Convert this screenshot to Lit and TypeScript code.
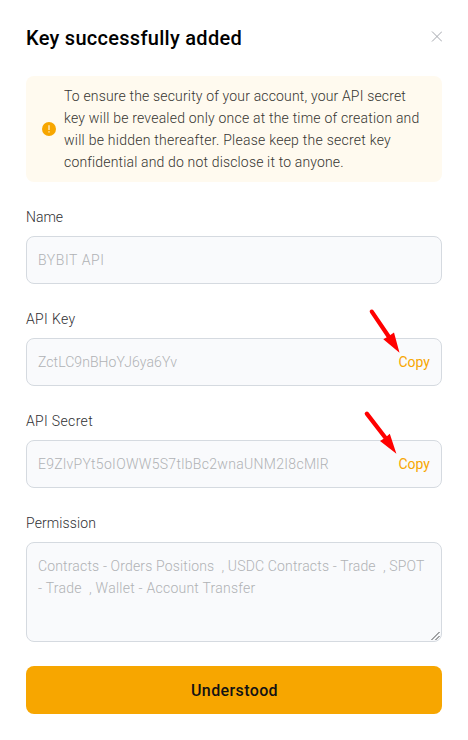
import { LitElement, html, css, svg } from "lit";
import { customElement, property } from "lit/decorators.js";

/* One line of text whose tracking is adjusted so that it spans a given width. */
@customElement("fit-line")
class FitLine extends LitElement {
  @property() text = "";
  @property({ type: Number }) span = 0;

  static styles = css`
    :host { display: block; white-space: pre; }
    span { display: inline-block; }
  `;

  render() {
    return html`<span>${this.text}</span>`;
  }

  updated() {
    const el = this.renderRoot.querySelector("span") as HTMLElement;
    el.style.letterSpacing = "0px";
    const natural = el.getBoundingClientRect().width;
    el.style.letterSpacing = `${(this.span - natural) / this.text.length}px`;
  }
}

const line = (text: string, span: number) =>
  html`<fit-line .text=${text} .span=${span}></fit-line>`;

@customElement("app-root")
class AppRoot extends LitElement {
  static styles = css`
    :host {
      display: block;
      position: relative;
      box-sizing: border-box;
      width: 468px;
      height: 740px;
      padding: 0 26px;
      background: #fff;
      color: #303033;
      font: 300 14px/22px Roboto, "Noto Sans", sans-serif;
      overflow: hidden;
    }
    .head { display: flex; justify-content: space-between; height: 76px; padding-top: 24px; box-sizing: border-box; }
    h1 { margin: 0; font: 500 20px/28px Roboto, sans-serif; color: #000; }
    .close { width: 11px; height: 11px; margin-top: 7px; }
    .note {
      display: flex;
      align-items: center;
      gap: 8px;
      height: 106px;
      box-sizing: border-box;
      padding: 0 16px;
      border-radius: 8px;
      background: #fffaef;
      color: #363531;
    }
    .note svg { width: 14px; height: 14px; flex: none; }
    .field { margin-top: 24px; }
    .label { height: 30px; }
    .box {
      display: flex;
      align-items: center;
      justify-content: space-between;
      height: 48px;
      box-sizing: border-box;
      padding: 0 11px;
      border: 1px solid #d5dae0;
      border-radius: 8px;
      background: #f9fafc;
      color: #b0b2b5;
    }
    .copy { color: #f7a600; font-weight: 370; }
    .area { position: relative; display: block; height: 100px; padding-top: 12px; }
    .grip { position: absolute; right: 0; bottom: 0; width: 10px; height: 10px; }
    button {
      display: flex;
      align-items: center;
      justify-content: center;
      width: 100%;
      height: 48px;
      margin-top: 24px;
      padding: 1px 0 0 1px;
      border: 0;
      border-radius: 8px;
      background: #f7a600;
      color: #121214;
      font: 500 16px/22px Roboto, sans-serif;
    }
    .arrows { position: absolute; left: 0; top: 0; width: 468px; height: 740px; pointer-events: none; }
  `;

  field(label: string, span: number, value: string, valueSpan: number, copy = false) {
    return html`<div class="field">
      <div class="label">${line(label, span)}</div>
      <div class="box">
        ${line(value, valueSpan)}
        ${copy ? html`<div class="copy">${line("Copy", 31.5)}</div>` : ""}
      </div>
    </div>`;
  }

  arrow(x1: number, y1: number, x2: number, y2: number, head: string) {
    return svg`<path d="M${x1} ${y1}L${x2} ${y2}" stroke="#f00" stroke-width="4.200" stroke-linecap="round"/>
      <path d=${head} fill="#f00"/>`;
  }

  render() {
    return html`
      <div class="head">
        <h1>${line("Key successfully added", 216)}</h1>
        <svg class="close" viewBox="0 0 11 11" fill="none" stroke="#a3a6ad"><path d="M1 .5l10 10M11 .5L1 10.500"/></svg>
      </div>
      <div class="note">
        <svg viewBox="0 0 14 14"><circle cx="7" cy="7" r="7" fill="#f7a600"/><path d="M7 3.200v4.800M7 9.200v1.400" stroke="#fff" stroke-width="1.200" opacity=".9"/></svg>
        <div>
          ${line("To ensure the security of your account, your API secret", 342)}
          ${line("key will be revealed only once at the time of creation and", 355.5)}
          ${line("will be hidden thereafter. Please keep the secret key", 327)}
          ${line("confidential and do not disclose it to anyone.", 279.5)}
        </div>
      </div>
      ${this.field("Name", 37, "BYBIT API", 66.5)}
      ${this.field("API Key", 49.5, "ZctLC9nBHoYJ6ya6Yv", 139, true)}
      ${this.field("API Secret", 67, "E9ZlvPYt5oIOWW5S7tlbBc2wnaUNM2I8cMlR", 291, true)}
      <div class="field">
        <div class="label">${line("Permission", 70)}</div>
        <div class="box area">
          ${line("Contracts - Orders Positions  , USDC Contracts - Trade  , SPOT", 386.5)}
          ${line("- Trade  , Wallet - Account Transfer", 217.5)}
          <svg class="grip" viewBox="0 0 10 10" fill="none" stroke="#4b4c4e"><path d="M.5 9L8.500 1M4.500 9l4-4"/></svg>
        </div>
      </div>
      <button>${line("Understood", 87)}</button>
      <svg class="arrows" viewBox="0 0 468 740">
        ${this.arrow(371.8, 311.6, 389, 337, "M399.500 352.800L383.300 339.300Q388.500 336.800 394 332.600Z")}
        ${this.arrow(366.8, 413.6, 386, 438.500, "M396.400 453.700L380 441Q385 438.500 389.800 433.800Z")}
      </svg>
    `;
  }
}
